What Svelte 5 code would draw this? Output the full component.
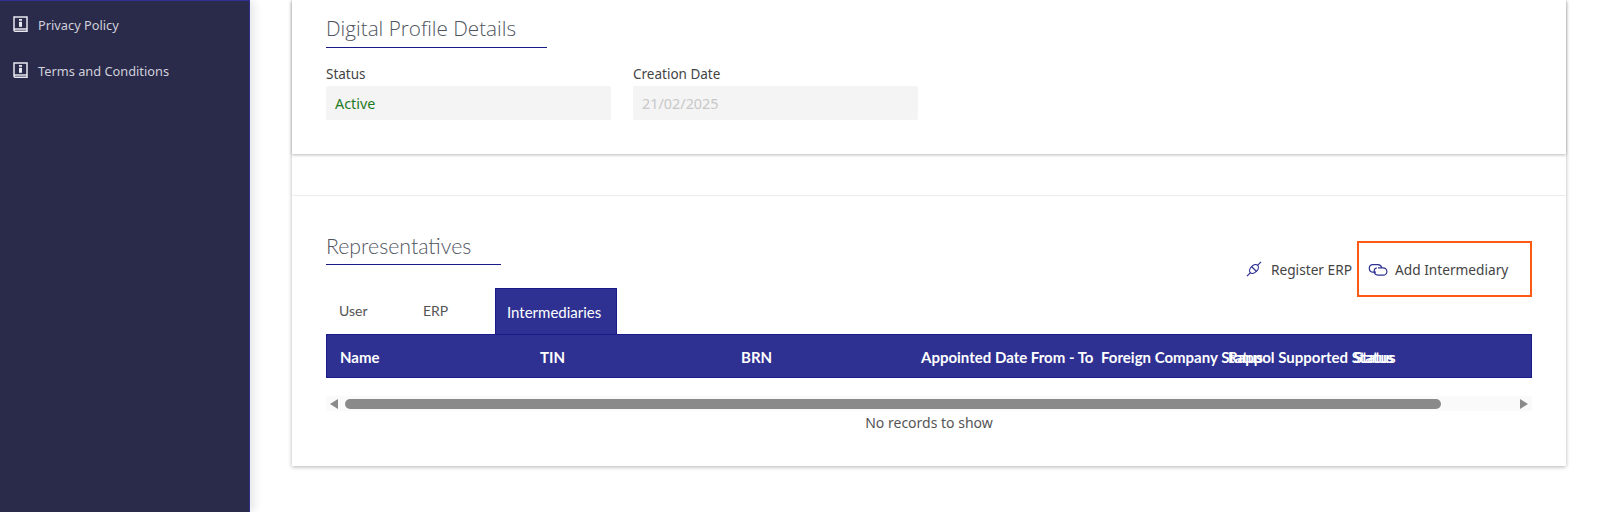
<script>
    const sideLinks = ["Privacy Policy", "Terms and Conditions"];

    const columns = [
        "Name",
        "TIN",
        "BRN",
        "Appointed Date From - To",
        "Foreign Company Status",
        "Rappol Supported Status",
        "Status",
    ];
</script>

<div class="page">
    <aside class="sidebar">
        {#each sideLinks as link}
            <a class="sideLink" href="#top">
                <svg class="bookIcon" width="15" height="16" viewBox="0 0 15 16">
                    <path d="M1 14V1h13v12H2.2C1.5 13 1 13.5 1 14.2S1.5 15.2 2.2 15.2H14V13" fill="none" stroke="#e8e8f0" stroke-width="1.5" />
                    <rect x="6" y="3" width="3" height="1.8" fill="#e8e8f0" />
                    <rect x="6" y="5.8" width="3" height="5" fill="#e8e8f0" />
                </svg>
                <span>{link}</span>
            </a>
        {/each}
    </aside>

    <main class="content">
        <div class="sheet">
            <section class="card first">
                <h2 class="title detailsTitle">Digital Profile Details</h2>
                <div class="fields">
                    <div class="field">
                        <label for="status">Status</label>
                        <div id="status" class="value active">Active</div>
                    </div>
                    <div class="field">
                        <label for="created">Creation Date</label>
                        <div id="created" class="value muted">21/02/2025</div>
                    </div>
                </div>
            </section>

            <section class="card second">
                <div class="cardTop">
                    <h2 class="title repTitle">Representatives</h2>
                    <div class="actions">
                        <button class="action register">
                            <svg width="16" height="18" viewBox="0 0 16 18" fill="none" stroke="#2e3192" stroke-width="1.2">
                                <ellipse cx="8" cy="9" rx="5.2" ry="3.4" transform="rotate(-45 8 9)" />
                                <path d="M11.8 5.2L15 1.8M4.2 12.8L1 16.2M5.5 6.5l5 5" />
                            </svg>
                            <span>Register ERP</span>
                        </button>
                        <button class="action intermediary">
                            <svg width="20" height="14" viewBox="0 0 20 14" fill="none" stroke="#2e3192" stroke-width="1.2">
                                <path d="M8 9.2H5a3.9 3.9 0 0 1-1-7.6h6a4.2 4.2 0 0 1 3.8 3" />
                                <path d="M10 4.8h5.2a3.7 3.7 0 0 1 0 7.4H10a4.2 4.2 0 0 1-3.8-4.2c0-1.5 1-3 2.6-3.2" />
                            </svg>
                            <span>Add Intermediary</span>
                        </button>
                    </div>
                </div>

                <div class="tabs">
                    <div class="tab user">User</div>
                    <div class="tab erp">ERP</div>
                    <div class="tab selected">Intermediaries</div>
                </div>

                <div class="tableHead">
                    {#each columns as col}
                        <div class="headCell">{col}</div>
                    {/each}
                </div>

                <div class="scrollbar">
                    <span class="arrow left"></span>
                    <span class="thumb"></span>
                    <span class="arrow right"></span>
                </div>

                <p class="empty">No records to show</p>
            </section>
        </div>
    </main>
</div>

<style>
    :global(body) {
        margin: 0;
        background: #fff;
        font-family: "Open Sans", "Noto Sans", sans-serif;
    }
    .page {
        display: flex;
        height: 512px;
        overflow: hidden;
    }
    .sidebar {
        width: 249px;
        flex: none;
        background: #2a2a4a;
        border-top: 1px solid #2e3192;
        border-right: 1px solid #2e3192;
        padding-top: 13px;
        display: flex;
        flex-direction: column;
        gap: 24px;
        box-shadow: 3px 0 10px rgba(0, 0, 0, 0.12);
        position: relative;
        z-index: 1;
    }
    .sideLink {
        display: flex;
        align-items: center;
        height: 22px;
        padding-left: 13px;
        gap: 10px;
        color: #d0d0da;
        font-size: 12.8px;
        text-decoration: none;
        font-family: "Noto Sans", sans-serif;
    }
    .bookIcon {
        flex: none;
        margin-top: -2px;
    }
    .content {
        flex: 1;
        padding: 0 34px 0 42px;
        min-width: 0;
    }
    .sheet {
        height: 466px;
        box-shadow: 0 1px 4px rgba(0, 0, 0, 0.3);
        background: #fff;
    }
    .card {
        background: #fff;
        box-sizing: border-box;
        padding-left: 34px;
        padding-right: 34px;
    }
    .first {
        height: 154px;
        padding-top: 14px;
        box-shadow: 0 1px 3px rgba(0, 0, 0, 0.28);
    }
    .second {
        margin-top: 41px;
        height: 271px;
        padding-top: 36px;
        border-top: 1px solid #ececec;
    }
    .title {
        margin: 0;
        font-weight: 300;
        line-height: 28px;
        color: #4f5560;
        border-bottom: 1px solid #1a1a8a;
        box-sizing: border-box;
    }
    .detailsTitle {
        width: 221px;
        height: 34px;
        font-size: 20.7px;
        font-family: "Open Sans", sans-serif;
    }
    .repTitle {
        width: 175px;
        height: 33px;
        font-size: 21.3px;
        font-family: Lato, sans-serif;
    }
    .fields {
        display: flex;
        gap: 22px;
        margin-top: 16px;
    }
    .field {
        width: 285px;
        display: flex;
        flex-direction: column;
    }
    label {
        font-size: 13.5px;
        line-height: 20px;
        color: #444;
        margin-bottom: 2px;
        font-family: "Noto Sans", sans-serif;
    }
    .value {
        height: 34px;
        line-height: 36px;
        background: #f4f4f4;
        border-radius: 2px;
        padding-left: 9px;
        font-size: 14.4px;
        font-family: "Noto Sans", sans-serif;
    }
    .active {
        color: #1f7a1f;
    }
    .muted {
        color: #c8c8c8;
    }
    .cardTop {
        display: flex;
        justify-content: space-between;
        align-items: flex-start;
    }
    .actions {
        display: flex;
        align-items: center;
        margin-top: 9px;
    }
    .action {
        display: flex;
        align-items: center;
        background: none;
        border: none;
        color: #444;
        font-size: 13.7px;
        font-family: "Noto Sans", sans-serif;
        padding: 0;
    }
    .register {
        gap: 9px;
        margin-right: 5px;
    }
    .intermediary {
        box-sizing: border-box;
        width: 175px;
        height: 56px;
        border: 2px solid #ff5a13;
        padding-left: 9px;
        gap: 7px;
        align-items: flex-start;
        padding-top: 17px;
    }
    .intermediary svg {
        margin-top: 3px;
    }
    .tabs {
        display: flex;
        height: 46px;
        margin-top: -9px;
    }
    .tab {
        font-family: Lato, sans-serif;
        font-size: 14px;
        line-height: 46px;
        color: #555;
        box-sizing: border-box;
    }
    .user {
        width: 85px;
        padding-left: 13px;
    }
    .erp {
        width: 84px;
        padding-left: 12px;
    }
    .selected {
        width: 122px;
        padding-left: 11px;
        font-size: 15px;
        background: #2e3192;
        color: #fff;
        border: 1px solid #1a1a8a;
        border-bottom: none;
    }
    .tableHead {
        display: grid;
        grid-template-columns: 200px 201px 180px 180px 127px 126px 1fr;
        height: 44px;
        align-items: center;
        box-sizing: border-box;
        padding: 1px 0 0 13px;
        background: #2e3192;
        border: 1px solid #1a1a8a;
    }
    .headCell {
        white-space: nowrap;
        color: #fff;
        font-family: Lato, sans-serif;
        font-size: 15px;
        font-weight: 700;
        min-width: 0;
    }
    .scrollbar {
        display: flex;
        align-items: center;
        height: 15px;
        margin-top: 18px;
        background: #fafafa;
        padding: 0 4px 0 4px;
    }
    .thumb {
        width: 1096px;
        height: 10px;
        margin-left: 7px;
        border-radius: 5px;
        background: #8a8a8a;
    }
    .arrow {
        width: 0;
        height: 0;
        border-top: 5px solid transparent;
        border-bottom: 5px solid transparent;
    }
    .arrow.left {
        border-right: 8px solid #8a8a8a;
    }
    .arrow.right {
        margin-left: auto;
        border-left: 8px solid #8a8a8a;
    }
    .empty {
        margin: 3px 0 0;
        text-align: center;
        font-size: 14px;
        line-height: 18px;
        color: #555;
        font-family: "Noto Sans", sans-serif;
    }
</style>
